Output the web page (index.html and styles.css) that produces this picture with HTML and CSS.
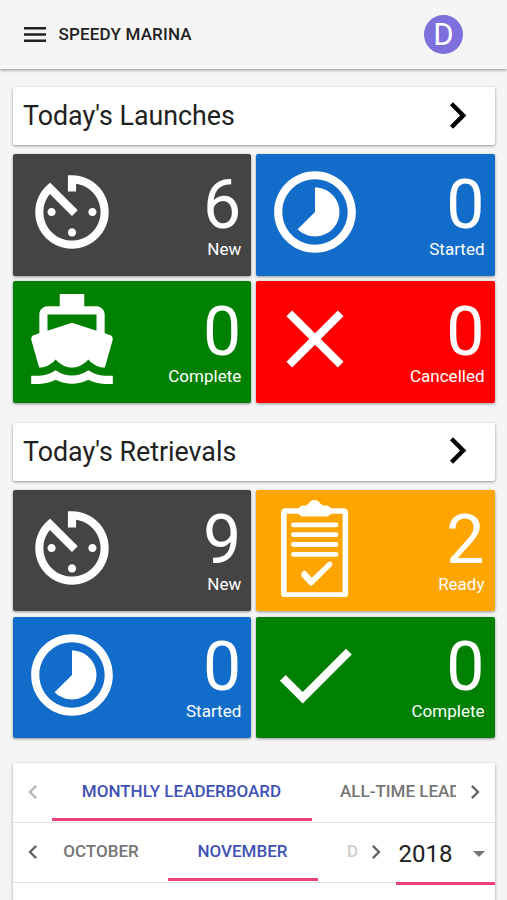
FILE: index.html
```html
<!DOCTYPE html>
<html lang="en">
<head>
<meta charset="utf-8">
<title>Speedy Marina</title>
<link rel="stylesheet" href="styles.css">
</head>
<body>
<svg class="defs" width="0" height="0">
  <symbol id="timer" viewBox="0 0 24 24"><path d="M11 17c0 .55.45 1 1 1s1-.45 1-1-.45-1-1-1-1 .45-1 1zm0-14v4h2V5.08c3.39.49 6 3.39 6 6.92 0 3.87-3.13 7-7 7s-7-3.13-7-7c0-1.68.59-3.22 1.58-4.42L12 13l1.41-1.41-6.8-6.8v.02C4.42 6.45 3 9.05 3 12c0 4.97 4.02 9 9 9 4.97 0 9-4.03 9-9s-4.03-9-9-9h-1zm7 9c0-.55-.45-1-1-1s-1 .45-1 1 .45 1 1 1 1-.45 1-1zM6 12c0 .55.45 1 1 1s1-.45 1-1-.45-1-1-1-1 .45-1 1z"/></symbol>
  <symbol id="lapse" viewBox="0 0 24 24"><path d="M16.24 7.76C15.07 6.59 13.54 6 12 6v6l-4.24 4.24c2.34 2.34 6.14 2.34 8.49 0 2.34-2.34 2.34-6.14-.01-8.48zM12 2C6.48 2 2 6.48 2 12s4.48 10 10 10 10-4.48 10-10S17.52 2 12 2zm0 18c-4.42 0-8-3.58-8-8s3.58-8 8-8 8 3.58 8 8-3.58 8-8 8z"/></symbol>
  <symbol id="boat" viewBox="0 0 24 24"><path d="M20 21c-1.39 0-2.78-.47-4-1.32-2.44 1.71-5.56 1.71-8 0C6.78 20.53 5.39 21 4 21H2v2h2c1.38 0 2.74-.35 4-.99 2.52 1.29 5.48 1.29 8 0 1.26.65 2.62.99 4 .99h2v-2h-2zM3.95 19H4c1.6 0 3.02-.88 4-2 .98 1.12 2.4 2 4 2s3.02-.88 4-2c.98 1.12 2.4 2 4 2h.05l1.89-6.68c.08-.26.06-.54-.06-.78s-.34-.42-.6-.5L20 10.62V6c0-1.1-.9-2-2-2h-3V1H9v3H6c-1.1 0-2 .9-2 2v4.62l-1.29.42c-.26.08-.48.26-.6.5s-.15.52-.06.78L3.95 19zM6 6h12v3.97L12 8 6 9.97V6z"/></symbol>
  <symbol id="close" viewBox="0 0 24 24"><path d="M19 6.41L17.59 5 12 10.59 6.41 5 5 6.41 10.59 12 5 17.59 6.41 19 12 13.41 17.59 19 19 17.59 13.41 12z"/></symbol>
  <symbol id="check" viewBox="0 0 24 24"><path d="M9 16.17L4.83 12l-1.42 1.41L9 19 21 7l-1.41-1.41z"/></symbol>
  <symbol id="clipboard" viewBox="0 0 98 98">
    <rect x="17.8" y="12" width="61.6" height="84" rx="1.5" fill="none" stroke="#fff" stroke-width="5.6"/>
    <path d="M40 6.500C42 5.500 42.500 4.800 43.500 3.300 46 .3 51 .3 53.500 3.300 54.500 4.800 55 5.500 57.500 6.500H60C63 6.500 64 8 65 9.500 66.500 11 66 14 64.500 15.200 63 17.500 61.500 17.500 59 17.500H38C35.500 17.500 34 17 32.800 15.200 31 13.500 31 11 32.500 9.500 33.500 7.500 35 6.500 37.500 6.500z"/>
    <path d="M27 25.900H71M27 35.700H71M27 45.500H71M27 55.300H71" stroke="#fff" stroke-width="4.800" stroke-linecap="round" transform="translate(1.200 0) scale(.97 1)"/>
    <path d="M35.500 74.500C36.500 71.300 39 70.800 40.500 73L45.800 78.800 62 63.300C64 61.300 67.300 63.500 66.300 66.500L47.300 85.500Q45 87.800 43 85.500L36.500 78.500Q34.800 76.500 35.500 74.500z"/>
  </symbol>
  <symbol id="right" viewBox="0 0 24 24"><path d="M10 6L8.590 7.410 13.170 12l-4.580 4.590L10 18l6-6z"/></symbol>
  <symbol id="left" viewBox="0 0 24 24"><path d="M15.410 7.410L14 6l-6 6 6 6 1.410-1.410L10.830 12z"/></symbol>
</svg>
<header class="toolbar">
  <svg class="menu" viewBox="0 0 22 15"><path d="M0 1.200H22M0 7.500H22M0 13.800H22" stroke="#212121" stroke-width="2.400"/></svg>
  <span class="brand">SPEEDY MARINA</span>
  <span class="avatar">D</span>
</header>
<main class="content">
  <section class="group">
    <div class="heading"><h2>Today's Launches</h2><svg class="go"><use href="#right"/></svg></div>
    <div class="tiles">
      <div class="tile gray"><svg class="icon"><use href="#timer"/></svg><div class="stat"><b>6</b><span>New</span></div></div>
      <div class="tile blue"><svg class="icon"><use href="#lapse"/></svg><div class="stat"><b>0</b><span>Started</span></div></div>
      <div class="tile green"><svg class="icon"><use href="#boat"/></svg><div class="stat"><b>0</b><span>Complete</span></div></div>
      <div class="tile red"><svg class="icon"><use href="#close"/></svg><div class="stat"><b>0</b><span>Cancelled</span></div></div>
    </div>
  </section>
  <section class="group">
    <div class="heading"><h2>Today's Retrievals</h2><svg class="go"><use href="#right"/></svg></div>
    <div class="tiles">
      <div class="tile gray"><svg class="icon"><use href="#timer"/></svg><div class="stat"><b>9</b><span>New</span></div></div>
      <div class="tile orange"><svg class="icon"><use href="#clipboard"/></svg><div class="stat"><b>2</b><span>Ready</span></div></div>
      <div class="tile blue"><svg class="icon"><use href="#lapse"/></svg><div class="stat"><b>0</b><span>Started</span></div></div>
      <div class="tile green"><svg class="icon"><use href="#check"/></svg><div class="stat"><b>0</b><span>Complete</span></div></div>
    </div>
  </section>
  <section class="board">
    <div class="tabs">
      <svg class="arrow off"><use href="#left"/></svg>
      <div class="strip">
        <span class="tab active monthly">MONTHLY LEADERBOARD</span>
        <span class="tab alltime">ALL-TIME LEAD</span>
      </div>
      <svg class="arrow"><use href="#right"/></svg>
    </div>
    <div class="tabs">
      <svg class="arrow"><use href="#left"/></svg>
      <div class="strip months">
        <span class="tab october">OCTOBER</span>
        <span class="tab active november">NOVEMBER</span>
        <span class="tab december">D</span>
      </div>
      <svg class="arrow narrow"><use href="#right"/></svg>
      <div class="year"><span>2018</span><i class="caret"></i></div>
    </div>
  </section>
</main>
</body>
</html>
```
FILE: styles.css
```css
* { box-sizing: border-box; }
body {
  margin: 0;
  height: 900px;
  overflow: hidden;
  background: #f5f5f5;
  color: #212121;
  font-family: Roboto, "Liberation Sans", sans-serif;
}
svg { display: block; flex: none; }
.defs { position: absolute; }

.toolbar {
  height: 69px;
  display: flex;
  align-items: center;
  padding: 0 44px 0 24px;
  box-shadow: 0 1px 3px rgba(0, 0, 0, .45);
}
.menu { width: 22px; height: 15px; margin-right: 12.500px; }
.brand { font-size: 17px; font-weight: 500; letter-spacing: .18px; line-height: 20px; margin-top: -2px; }
.avatar {
  width: 39px;
  height: 39px;
  margin-left: auto;
  border-radius: 50%;
  background: #7e70dc;
  color: #fff;
  font-size: 31px;
  line-height: 40px;
  text-align: center;
}

.content { padding: 18px 12.500px 0 13px; }
.group { margin-bottom: 20px; }
.heading {
  height: 58px;
  margin-bottom: 9px;
  padding: 0 10.500px 0 10px;
  display: flex;
  align-items: center;
  justify-content: space-between;
  border-radius: 2px;
  background: #fff;
  box-shadow: 0 1px 3px rgba(0, 0, 0, .4);
}
h2 { margin: 0; font-size: 26.800px; font-weight: 400; line-height: 32px; }
.go { width: 53px; height: 53px; margin-top: -2px; fill: #000; }

.tiles { display: grid; grid-template-columns: 1fr 1fr; gap: 5.500px 5px; }
.tile {
  height: 121.500px;
  display: flex;
  justify-content: space-between;
  padding: 9px 10px;
  border-radius: 2px;
  color: #fff;
  box-shadow: 0 1px 3px rgba(0, 0, 0, .4);
}
.tile:nth-child(even) { padding-left: 9.500px; }
.icon { width: 98px; height: 98px; fill: #fff; }
.gray { background: #444; }
.blue { background: #126cca; }
.green { background: #008000; }
.red { background: #f00; }
.orange { background: #ffa500; }
.stat { display: flex; flex-direction: column; align-items: flex-end; }
.stat b { font-size: 68px; font-weight: 400; line-height: 68px; margin-top: 7.500px; }
.stat span { font-size: 17px; line-height: 20px; }

.board {
  margin-top: 24.500px;
  height: 160px;
  background: #fff;
  box-shadow: 0 1px 3px rgba(0, 0, 0, .35);
}
.tabs { height: 60px; display: flex; align-items: center; border-bottom: 1px solid #e0e0e0; }
.arrow { width: 28px; height: 28px; margin: 0 5.500px; fill: #666; }
.arrow.off { fill: #b5b5b5; }
.arrow.narrow { margin: 0 5px; }
.strip { flex: 1; min-width: 0; height: 60px; display: flex; overflow: hidden; }
.months { flex: 0 0 305px; }
.tab {
  flex: none;
  height: 59px;
  line-height: 58px;
  color: #757575;
  font-size: 17px;
  font-weight: 500;
  text-align: center;
  white-space: nowrap;
}
.active { color: #3f51b5; border-bottom: 3px solid #ec407a; }
.monthly { width: 260px; padding-right: 1px; }
.alltime { width: 143.500px; padding-left: 28px; overflow: hidden; text-align: left; }
.october { width: 116px; padding-right: 18px; }
.november { width: 150px; padding-right: 1px; }
.december { padding-left: 29px; color: #ccc; }
.year {
  width: 99px;
  height: 62px;
  align-self: flex-start;
  margin-left: auto;
  display: flex;
  align-items: center;
  justify-content: space-between;
  padding: 3px 10px 0 3px;
  border-bottom: 3px solid #ec407a;
  font-size: 24px;
}
.caret { border: 6px solid transparent; border-top-color: #757575; border-bottom: 0; }
```
